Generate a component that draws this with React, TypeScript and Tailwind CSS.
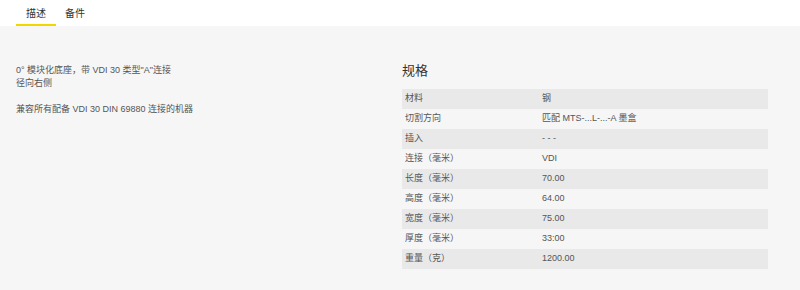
import React from "react";

const rows: [string, string][] = [
  ["材料", "钢"],
  ["切割方向", "匹配 MTS-...L-...-A 墨盒"],
  ["插入", "- - -"],
  ["连接（毫米）", "VDI"],
  ["长度（毫米）", "70.00"],
  ["高度（毫米）", "64.00"],
  ["宽度（毫米）", "75.00"],
  ["厚度（毫米）", "33:00"],
  ["重量（克）", "1200.00"],
];

export default function App() {
  return (
    <div
      className="w-[800px] h-[290px] bg-[#f6f6f6] text-[#555] overflow-hidden"
      style={{ fontFamily: '"Liberation Sans", "Noto Sans CJK SC", sans-serif' }}
    >
      <div className="h-[26px] bg-white flex pl-[16px]">
        <div className="relative px-[10px] h-full flex items-center text-[10px] text-[#333]">
          描述
          <div className="absolute left-0 right-0 bottom-0 h-[2px] bg-[#f2d600]" />
        </div>
        <div className="px-[9px] h-full flex items-center text-[10px] text-[#333]">备件</div>
      </div>
      <div className="flex pl-[16px]">
        <div className="w-[386px] pt-[38px] text-[9px] leading-[13px]">
          <p>0° 模块化底座，带 VDI 30 类型"A"连接</p>
          <p>径向右侧</p>
          <p className="mt-[13px]">兼容所有配备 VDI 30 DIN 69880 连接的机器</p>
        </div>
        <div className="w-[366px] pt-[37px]">
          <h2 className="text-[13px] leading-[16px] text-[#333] mb-[10px]">规格</h2>
          <div className="flex flex-col">
            {rows.map(([k, v], i) => (
              <div
                key={k}
                className={`flex h-[20px] items-center text-[9px] ${i % 2 === 0 ? "bg-[#e9e9e9]" : ""}`}
              >
                <div className="w-[137px] pl-[3px]">{k}</div>
                <div className="flex-1 pl-[3px]">{v}</div>
              </div>
            ))}
          </div>
        </div>
      </div>
    </div>
  );
}
